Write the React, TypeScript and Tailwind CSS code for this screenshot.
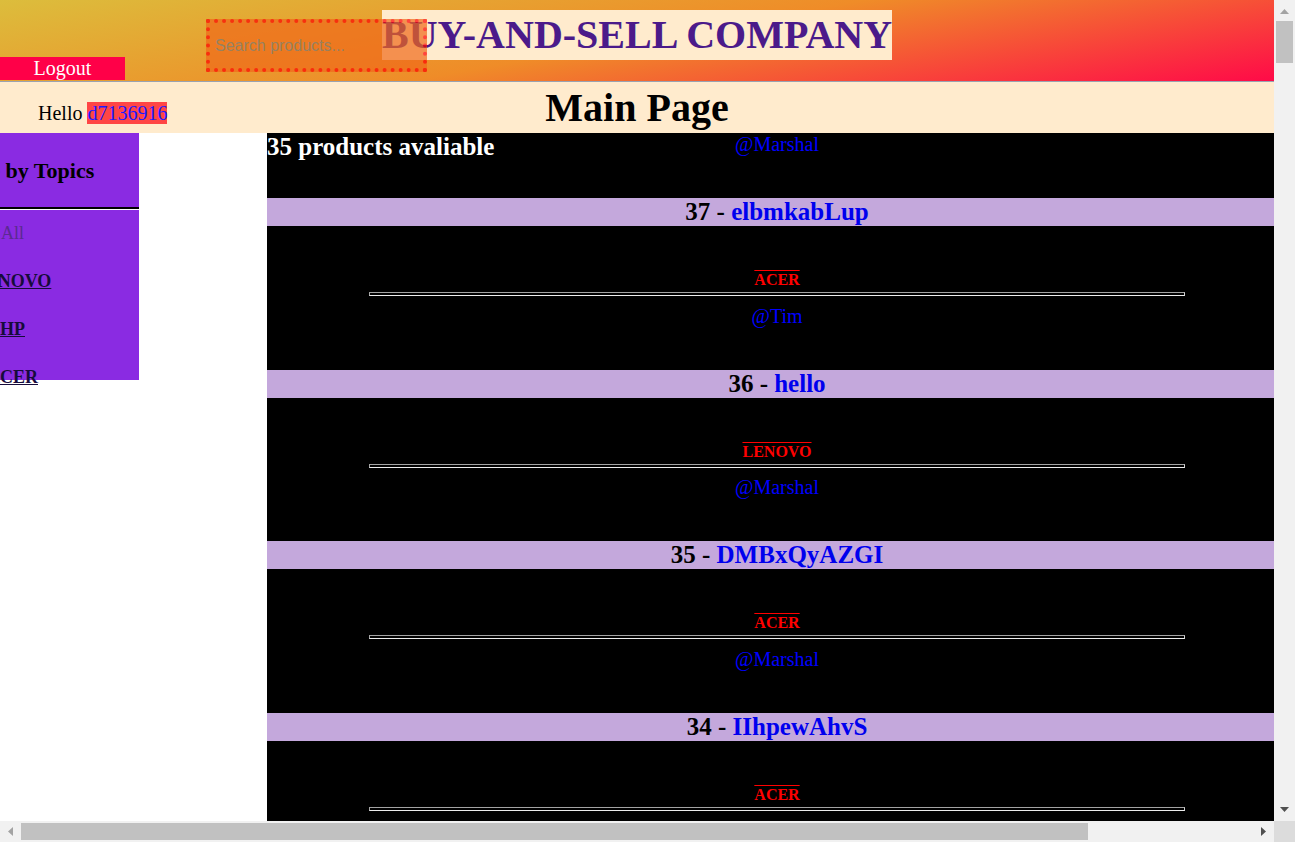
import type { ReactNode } from 'react'

interface Product {
  id: number
  name: string
  topic: string
  author: string
}

const names = [
  'elbmkabLup', 'hello', 'DMBxQyAZGI', 'IIhpewAhvS', 'qWnRtYbZcK', 'ZxPoLmNbVc', 'laptop', 'RtGhYuJkLo',
  'mNbVcXzAsD', 'PoIuYtReWq', 'aSdFgHjKlZ', 'XcVbNmQwEr', 'TyUiOpAsDf', 'GhJkLzXcVb', 'nMqWeRtYuI',
  'OpAsDfGhJk', 'LzXcVbNmQw', 'ErTyUiOpAs', 'DfGhJkLzXc', 'VbNmQwErTy', 'UiOpAsDfGh', 'JkLzXcVbNm',
  'QwErTyUiOp', 'AsDfGhJkLz', 'XcVbNmAsDf', 'test', 'GhJkQwErTy', 'UiOpZxCvBn', 'MlKjHgFdSa',
  'PoIuYtRqWe', 'ZaXsCdVfBg', 'NhMjKiLoPq', 'WsEdRfTgYh', 'UjIkOlPmNb', 'VcXzLkJhGf',
]
const topics = ['ACER', 'LENOVO', 'ACER', 'ACER', 'HP', 'LENOVO', 'HP', 'ACER']
const authors = ['Marshal', 'Tim', 'Marshal', 'Marshal', 'Tim', 'Marshal', 'Tim']

const products: Product[] = names.map((name, i) => ({
  id: 37 - i,
  name,
  topic: topics[i % topics.length],
  author: authors[i % authors.length],
}))

function ProductCard({ product }: { product: Product }) {
  return (
    <article>
      <div className="h-[65px] text-center text-[20px] leading-[23px]">
        <a href="#" className="text-[#0000ff]">@{product.author}</a>
      </div>
      <h3 className="h-[28px] bg-[#c4a8dc] text-center text-[25px] font-bold leading-[28px] text-black">
        {product.id} - <a href="#" className="text-[#0000ee]">{product.name}</a>
      </h3>
      <div className="pt-[45px] pb-[3px] text-center text-[16px] font-bold leading-[18px] text-[#ff0000]">
        <span className="overline">{product.topic}</span>
      </div>
      <div className="mx-auto mb-[8.5px] h-[4px] w-[80%] border border-t-[#a3a3a3] border-l-[#a3a3a3] border-b-[#ececec] border-r-[#d0d0d0]" />
    </article>
  )
}

function TopicLink({ children, active }: { children: ReactNode; active?: boolean }) {
  if (active) {
    return <span className="text-[18px] leading-[20px] text-[#5b2a91]">{children}</span>
  }
  return (
    <a href="#" className="text-[18px] font-bold leading-[20px] text-[#170b3b] underline">
      {children}
    </a>
  )
}

// arrow glyphs of the classic scrollbar
function Arrow({ dir, dim }: { dir: 'up' | 'down' | 'left' | 'right'; dim?: boolean }) {
  const fill = dim ? '#a3a3a3' : '#505050'
  const vertical = dir === 'up' || dir === 'down'
  const points = {
    up: '0,5 4.5,0 9,5',
    down: '0,0 9,0 4.5,5',
    left: '5,0 5,9 0,4.5',
    right: '0,0 5,4.5 0,9',
  }[dir]
  return (
    <svg width={vertical ? 9 : 5} height={vertical ? 5 : 9} viewBox={vertical ? '0 0 9 5' : '0 0 5 9'}>
      <polygon points={points} fill={fill} />
    </svg>
  )
}

function Page() {
  return (
    <div className="font-['Liberation_Serif',serif] text-black">
      <header className="flex h-[82px] items-start border-b border-[#9aa2b1] bg-[linear-gradient(170deg,#dcbd3c_0%,#ef8c28_50%,#ff0a48_100%)]">
        <button className="mt-[57px] h-[23px] w-[125px] shrink-0 bg-[#ff0048] text-[20px] leading-[23px] text-white">
          Logout
        </button>
        <input
          placeholder="Search products..."
          className="relative z-10 ml-[81px] mt-[19px] h-[53px] w-[221px] shrink-0 border-4 border-dotted border-[#ff0000] bg-[#f06a1a] px-[5px] font-['Liberation_Sans',sans-serif] text-[16px] opacity-70 outline-none placeholder:text-[#757575]"
        />
        <h1 className="-ml-[45px] mt-[10px] h-[50px] shrink-0 bg-[#ffebcd] text-[40px] font-bold leading-[50px] text-[#4b1a8a]">
          BUY-AND-SELL COMPANY
        </h1>
      </header>

      <div className="grid h-[51px] bg-[#ffebcd]">
        <p className="col-start-1 row-start-1 self-end pb-[8px] pl-[38px] text-[20px] leading-[23px]">
          Hello <span className="bg-[#ff4545] text-[#1a1aff]">d7136916</span>
        </p>
        <h1 className="col-start-1 row-start-1 text-center text-[40px] font-bold leading-[51px]">Main Page</h1>
      </div>

      <div className="flex">
        <div className="w-[267px] shrink-0">
          <aside className="-ml-[114px] w-[253px]">
            <div className="flex h-[76px] items-center justify-center border-b-2 border-black bg-[#8a2be2]">
              <h2 className="text-[22px] font-bold">Browse by Topics</h2>
            </div>
            <nav className="mt-[1px] flex h-[170px] flex-col items-center gap-[28px] bg-[#8a2be2] pt-[13px]">
              <TopicLink active>All</TopicLink>
              <TopicLink>LENOVO</TopicLink>
              <TopicLink>HP</TopicLink>
              <TopicLink>ACER</TopicLink>
            </nav>
          </aside>
        </div>

        <main className="grid w-[1020px] shrink-0 content-start bg-black">
          <h2 className="relative z-10 col-start-1 row-start-1 self-start justify-self-start text-[25px] font-bold leading-[28px] text-white">
            35 products avaliable
          </h2>
          <div className="col-start-1 row-start-1">
            {products.map(p => (
              <ProductCard key={p.id} product={p} />
            ))}
          </div>
        </main>
      </div>
    </div>
  )
}

export default function App() {
  return (
    <div className="grid h-[842px] w-[1295px] grid-cols-[1274px_21px] grid-rows-[821px_21px] overflow-hidden bg-white">
      <div className="overflow-hidden">
        <Page />
      </div>

      {/* vertical scrollbar */}
      <div className="flex flex-col bg-[#f1f1f1]">
        <div className="flex h-[21px] items-center justify-center pt-[2px]">
          <Arrow dir="up" dim />
        </div>
        <div className="mx-[2px] h-[42px] bg-[#c1c1c1]" />
        <div className="flex-1" />
        <div className="flex h-[21px] items-center justify-center pb-[3px]">
          <Arrow dir="down" />
        </div>
      </div>

      {/* horizontal scrollbar */}
      <div className="flex bg-[#f1f1f1]">
        <div className="flex w-[21px] items-center justify-center">
          <Arrow dir="left" dim />
        </div>
        <div className="my-[2px] w-[1067px] bg-[#c1c1c1]" />
        <div className="flex-1" />
        <div className="flex w-[21px] items-center justify-center pr-[1px]">
          <Arrow dir="right" />
        </div>
      </div>

      <div className="bg-[#dcdcdc]" />
    </div>
  )
}
